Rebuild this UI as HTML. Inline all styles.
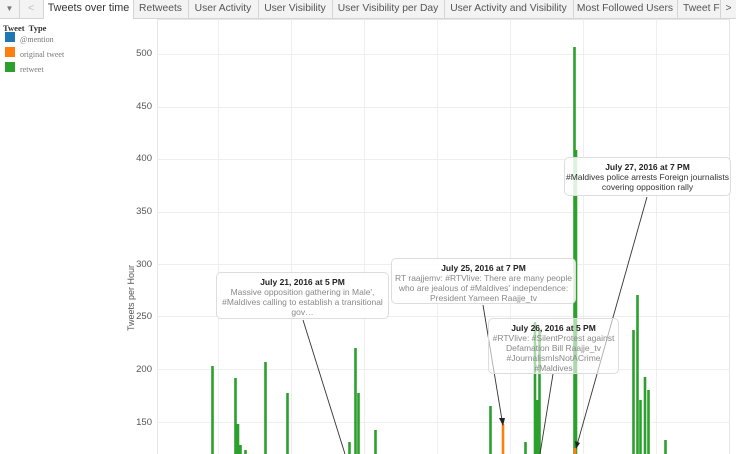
<!DOCTYPE html>
<html><head><style>
body{margin:0;width:736px;height:454px;overflow:hidden;background:#fff;font-family:"Liberation Sans",sans-serif;position:relative}
.bar{position:absolute;left:0;top:0;width:736px;height:18px;background:#f3f3f3;border-bottom:1px solid #d4d4d4}
.tab{position:absolute;top:0;height:18px;line-height:17px;font-size:10.3px;color:#555;border-right:1px solid #d4d4d4;text-align:center;white-space:nowrap;overflow:hidden}
.leg{position:absolute;left:3px;font-family:"Liberation Serif",serif;font-size:8px;color:#777}
.sw{position:absolute;left:5px;width:10px;height:10px}
.tick{position:absolute;right:584px;font-size:9.5px;color:#555}
.tip{position:absolute;background:rgba(255,255,255,.85);border:1px solid #ddd;border-radius:5px;font-size:8.5px;color:#888;text-align:center;line-height:10px;box-sizing:border-box;padding-top:4px}
.tip b{color:#222;display:block}
</style></head><body>
<div class="bar"></div>
<div class="tab" style="left:0;width:19px;color:#777;font-size:8px">▼</div>
<div class="tab" style="left:19px;width:24px;color:#bbb">&lt;</div>
<div class="tab" style="left:44px;width:89px;background:#fff;color:#333;height:19px;font-size:10.8px">Tweets over time</div>
<div class="tab" style="left:133px;width:55px">Retweets</div>
<div class="tab" style="left:188px;width:70px">User Activity</div>
<div class="tab" style="left:258px;width:74px">User Visibility</div>
<div class="tab" style="left:332px;width:112px">User Visibility per Day</div>
<div class="tab" style="left:444px;width:129px">User Activity and Visibility</div>
<div class="tab" style="left:573px;width:104px">Most Followed Users</div>
<div class="tab" style="left:677px;width:44px;text-align:left;padding-left:6px;box-sizing:border-box">Tweet F</div>
<div class="tab" style="left:721px;width:15px;border:none">&gt;</div>
<div class="leg" style="top:23px;color:#333;font-weight:bold;font-size:8.5px">Tweet&nbsp; Type</div>
<div class="sw" style="top:32px;background:#1f77b4"></div><div class="leg" style="left:20px;top:35px">@mention</div>
<div class="sw" style="top:47px;background:#ff7f0e"></div><div class="leg" style="left:20px;top:50px">original tweet</div>
<div class="sw" style="top:62px;background:#2ca02c"></div><div class="leg" style="left:20px;top:65px">retweet</div>
<div class="tick" style="top:48px">500</div>
<div class="tick" style="top:101px">450</div>
<div class="tick" style="top:153px">400</div>
<div class="tick" style="top:206px">350</div>
<div class="tick" style="top:259px">300</div>
<div class="tick" style="top:311px">250</div>
<div class="tick" style="top:364px">200</div>
<div class="tick" style="top:417px">150</div>
<div style="position:absolute;left:131px;top:298px;transform:translate(-50%,-50%) rotate(-90deg);font-size:9px;color:#555;white-space:nowrap">Tweets per Hour</div>
<svg style="position:absolute;left:0;top:0" width="736" height="454">
<rect x="157.5" y="19.5" width="572" height="450" fill="none" stroke="#e6e6e6"/>
<g stroke="#eee" stroke-width="1">
<line x1="157" x2="729" y1="54.5" y2="54.5"/><line x1="157" x2="729" y1="107.5" y2="107.5"/><line x1="157" x2="729" y1="159.5" y2="159.5"/><line x1="157" x2="729" y1="212.5" y2="212.5"/><line x1="157" x2="729" y1="264.5" y2="264.5"/><line x1="157" x2="729" y1="316.5" y2="316.5"/><line x1="157" x2="729" y1="369.5" y2="369.5"/><line x1="157" x2="729" y1="422.5" y2="422.5"/>
<line x1="218.5" x2="218.5" y1="19" y2="454"/><line x1="291.5" x2="291.5" y1="19" y2="454"/><line x1="364.5" x2="364.5" y1="19" y2="454"/><line x1="437.5" x2="437.5" y1="19" y2="454"/><line x1="510.5" x2="510.5" y1="19" y2="454"/><line x1="583.5" x2="583.5" y1="19" y2="454"/><line x1="656.5" x2="656.5" y1="19" y2="454"/>
</g>
<path fill="none" stroke="#2ca02c" stroke-width="2.6" stroke-linejoin="round" d="
M212.5 460V366 M235.5 460V378 M238 460V424 M240.5 460V445 M245.5 460V450
M265.5 460V362 M287.5 460V393 M349.5 460V442 M355.5 460V348 M358.5 460V393 M375.5 460V430
M490.5 460V406 M525.5 460V442 M535 460V322 M537.5 460V400 M539.5 460V330
M574.5 460V47 M576 460V150
M633.5 460V330 M637.5 460V295 M640.5 460V400 M645 460V377 M648.5 460V390 M665.5 460V440"/>
<path d="M503 460V424 M575 460V448" fill="none" stroke="#ff7f0e" stroke-width="2.6"/>
<g stroke="#333" stroke-width="0.9">
<line x1="303" y1="320" x2="345" y2="454"/>
<line x1="483" y1="305" x2="502" y2="420"/>
<line x1="553" y1="374" x2="540" y2="454"/>
<line x1="647" y1="197" x2="577" y2="445"/>
</g>
<polygon points="499,418 505,418 503,426" fill="#222"/>
<polygon points="575,441 580,443 576,449" fill="#222"/>
</svg>
<div class="tip" style="left:216px;top:272px;width:173px;height:47px"><b>July 21, 2016 at 5 PM</b>Massive opposition gathering in Male',<br>#Maldives calling to establish a transitional<br>gov…</div>
<div class="tip" style="left:391px;top:258px;width:185px;height:46px"><b>July 25, 2016 at 7 PM</b>RT raajjemv: #RTVlive: There are many people<br>who are jealous of #Maldives' independence:<br>President Yameen Raajje_tv</div>
<div class="tip" style="left:488px;top:318px;width:131px;height:56px;background:rgba(255,255,255,.6)"><b>July 26, 2016 at 5 PM</b>#RTVlive: #SilentProtest against<br>Defamation Bill Raajje_tv<br>#JournalismIsNotACrime<br>#Maldives</div>
<div class="tip" style="left:564px;top:157px;width:167px;height:39px;color:#333"><b>July 27, 2016 at 7 PM</b>#Maldives police arrests Foreign journalists<br>covering opposition rally</div>
</body></html>
